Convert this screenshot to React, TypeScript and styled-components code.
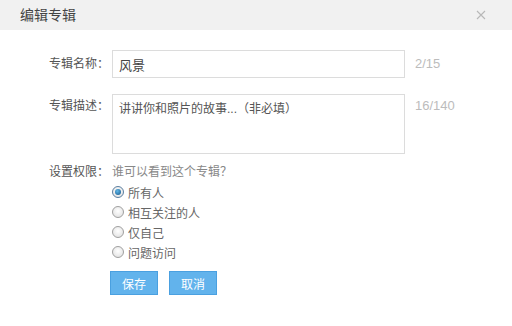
import React, { FC, useState } from 'react';
import styled, { createGlobalStyle } from 'styled-components';

const GlobalStyle = createGlobalStyle`
    html, body {
        margin: 0;
        padding: 0;
        background: #fff;
    }
    body {
        font-family: "Liberation Sans", "Noto Sans CJK SC", sans-serif;
        font-size: 12px;
        color: #555;
    }
`;

interface Option {
    id: string;
    text: string;
}

const options: Option[] = [
    { id: 'all', text: '所有人' },
    { id: 'mutual', text: '相互关注的人' },
    { id: 'self', text: '仅自己' },
    { id: 'question', text: '问题访问' },
];

const App: FC = () => {
    const [name, setName] = useState('风景');
    const [desc, setDesc] = useState('');
    const [access, setAccess] = useState('all');

    return (
        <>
            <GlobalStyle />
            <Dialog>
                <Header>
                    <Title>编辑专辑</Title>
                    <CloseButton aria-label="关闭">
                        <svg width="10" height="10" viewBox="0 0 10 10">
                            <path d="M1 1 L9 9 M9 1 L1 9" stroke="#b8b8b8" strokeWidth="1.1" fill="none" />
                        </svg>
                    </CloseButton>
                </Header>
                <Body>
                    <Row>
                        <Label $tall>专辑名称：</Label>
                        <TextInput value={name} maxLength={15} onChange={(e) => setName(e.target.value)} />
                        <Counter $tall>{name.length}/15</Counter>
                    </Row>
                    <Row>
                        <Label>专辑描述：</Label>
                        <TextArea
                            value={desc}
                            maxLength={140}
                            placeholder="讲讲你和照片的故事...（非必填）"
                            onChange={(e) => setDesc(e.target.value)}
                        />
                        <Counter>16/140</Counter>
                    </Row>
                    <PermRow>
                        <Label>设置权限：</Label>
                        <div>
                            <Hint>谁可以看到这个专辑？</Hint>
                            <RadioList>
                                {options.map((opt) => (
                                    <RadioItem key={opt.id} onClick={() => setAccess(opt.id)}>
                                        <RadioDot $checked={access === opt.id} />
                                        {opt.text}
                                    </RadioItem>
                                ))}
                            </RadioList>
                            <Buttons>
                                <Button>保存</Button>
                                <Button>取消</Button>
                            </Buttons>
                        </div>
                    </PermRow>
                </Body>
            </Dialog>
        </>
    );
};

const Dialog = styled.div`
    width: 512px;
    height: 326px;
    background: #fff;
`;

const Header = styled.div`
    height: 30px;
    background: #f1f1f1;
    display: flex;
    align-items: center;
    justify-content: space-between;
    padding: 0 26px 0 20px;
`;

const Title = styled.div`
    font-size: 14px;
    color: #444;
    line-height: 30px;
`;

const CloseButton = styled.button`
    border: none;
    background: none;
    padding: 0;
    display: flex;
    cursor: pointer;
`;

const Body = styled.div`
    padding-top: 20px;
`;

const Row = styled.div`
    display: grid;
    grid-template-columns: 112px 293px auto;
    align-items: start;
    margin-bottom: 16px;
`;

const PermRow = styled(Row)`
    margin-top: -10px;
    grid-template-columns: 112px auto;
`;

const Label = styled.div<{ $tall?: boolean }>`
    text-align: right;
    padding-right: 3px;
    line-height: ${(p) => (p.$tall ? '28px' : '20px')};
    padding-top: ${(p) => (p.$tall ? '0' : '2px')};
    color: #555;
    white-space: nowrap;
`;

const Counter = styled.div<{ $tall?: boolean }>`
    padding-left: 10px;
    font-size: 13px;
    color: #bcbcbc;
    line-height: ${(p) => (p.$tall ? '28px' : '20px')};
    padding-top: ${(p) => (p.$tall ? '0' : '2px')};
`;

const TextInput = styled.input`
    box-sizing: border-box;
    width: 293px;
    height: 28px;
    border: 1px solid #dcdcdc;
    padding: 0 6px;
    font-family: inherit;
    font-size: 13px;
    color: #444;
    outline: none;
`;

const TextArea = styled.textarea`
    box-sizing: border-box;
    width: 293px;
    height: 60px;
    border: 1px solid #dcdcdc;
    padding: 4px 6px;
    font-family: inherit;
    font-size: 12px;
    line-height: 20px;
    color: #333;
    resize: none;
    outline: none;
    &::placeholder {
        color: #555;
        opacity: 1;
    }
`;

const Hint = styled.div`
    line-height: 20px;
    padding-top: 2px;
    color: #888;
`;

const RadioList = styled.div`
    display: flex;
    flex-direction: column;
`;

const RadioItem = styled.label`
    display: flex;
    align-items: center;
    gap: 4px;
    height: 20px;
    color: #666;
    cursor: pointer;
`;

const RadioDot = styled.span<{ $checked: boolean }>`
    box-sizing: border-box;
    width: 12px;
    height: 12px;
    border-radius: 50%;
    border: 1px solid ${(p) => (p.$checked ? '#5a7ea0' : '#a0a0a0')};
    background: radial-gradient(circle at 50% 40%, #ffffff 0%, #dcdcdc 100%);
    position: relative;
    &::after {
        content: '';
        display: ${(p) => (p.$checked ? 'block' : 'none')};
        position: absolute;
        left: 2px;
        top: 2px;
        width: 6px;
        height: 6px;
        border-radius: 50%;
        background: radial-gradient(circle at 40% 35%, #5fb7e8 0%, #1b5f93 90%);
    }
`;

const Buttons = styled.div`
    display: flex;
    gap: 11px;
    margin: 9px 0 0 -2px;
`;

const Button = styled.button`
    width: 48px;
    height: 24px;
    border: 1px solid #4aa0e0;
    background: #62b3ec;
    color: #fff;
    font-family: inherit;
    font-size: 12px;
    padding: 0;
    cursor: pointer;
`;

export default App;
